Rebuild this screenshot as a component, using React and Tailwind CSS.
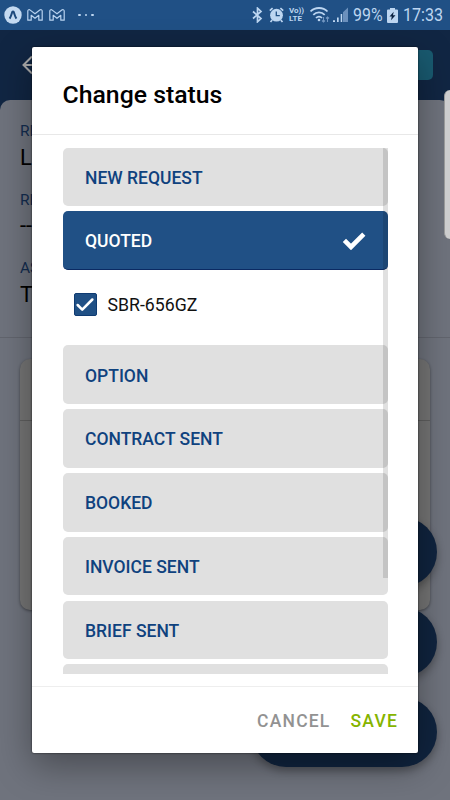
import { Check } from 'lucide-react';
import clsx from 'clsx';

const statuses = [
  { label: 'NEW REQUEST' },
  { label: 'QUOTED', selected: true, reference: 'SBR-656GZ' },
  { label: 'OPTION' },
  { label: 'CONTRACT SENT' },
  { label: 'BOOKED' },
  { label: 'INVOICE SENT' },
  { label: 'BRIEF SENT' },
  { label: '' },
];

const details = [
  { label: 'RE', value: 'L' },
  { label: 'RE', value: '--' },
  { label: 'AS', value: 'T' },
];

function MailIcon() {
  return (
    <svg className="h-3 w-4" viewBox="0 0 16 12" fill="none" stroke="#b9d3f0" strokeWidth="1.2" strokeLinejoin="round">
      <path d="M.8 11.200V2C.8.700 2.300.4 3.200 1.100L8 4.800l4.800-3.700c.9-.7 2.400-.4 2.400.9v9.200h-3.400V6.300L8 9.300 4.200 6.300v4.900Z" />
    </svg>
  );
}

function StatusBar() {
  return (
    <div className="flex h-[30px] items-center justify-between bg-[#205085] pl-1 pr-[6px] text-[#bdd6f1]">
      <div className="flex items-center">
        <svg className="h-[18px] w-[18px]" viewBox="0 0 18 18">
          <circle cx="9" cy="9" r="8.700" fill="#c3d9f1" />
          <path d="M5.600 12.600C7 10.500 7.700 8 8.300 5.900q.7-.9 1.400 0c.6 2.100 1.300 4.600 2.700 6.700" fill="none" stroke="#1d497c" strokeWidth="2" />
        </svg>
        <div className="ml-[5px] flex gap-[6px]">
          <MailIcon />
          <MailIcon />
        </div>
        <div className="ml-[13px] flex gap-1">
          <span className="size-[2.5px] rounded-full bg-[#bdd6f1]" />
          <span className="size-[2.5px] rounded-full bg-[#bdd6f1]" />
          <span className="size-[2.5px] rounded-full bg-[#bdd6f1]" />
        </div>
      </div>
      <div className="flex items-center">
        {/* Bluetooth */}
        <svg className="h-4 w-[11px]" viewBox="0 0 11 16" fill="none" stroke="currentColor" strokeWidth="1.700">
          <path d="M1 4.500 9 11.500 5.500 14.800V1.200L9 4.500 1 11.500" />
        </svg>
        {/* Alarm */}
        <svg className="ml-[6px] h-4 w-[15px]" viewBox="0 0 15 16">
          <circle cx="7.500" cy="8.200" r="6.400" fill="currentColor" />
          <path d="M.8 3.700 3.600 1.200M14.200 3.700 11.400 1.200M3.200 13 1.500 15M11.800 13l1.700 2" stroke="currentColor" strokeWidth="1.700" />
          <path d="M7.300 4.500v4.200h3.500" fill="none" stroke="#205085" strokeWidth="1.300" />
        </svg>
        {/* VoLTE */}
        <div className="ml-[5px] w-[16px] text-[8px] font-bold leading-[8px]">
          <div className="whitespace-nowrap">Vo))</div>
          <div>LTE</div>
        </div>
        {/* Wi-Fi */}
        <svg className="ml-[5px] h-4 w-5" viewBox="0 0 20 16" fill="none" stroke="currentColor">
          <path d="M.5 4.500c4.500-4.700 12.500-4.700 17 0M3.300 7.800c3.200-3.300 8.200-3.300 11.400 0M6 11c1.700-1.800 4.300-1.800 6 0" strokeWidth="1.800" />
          <circle cx="9" cy="13" r="1.300" fill="currentColor" stroke="none" />
          <path d="M13.500 10v5M12 13.500l1.500 1.500 1.500-1.500M17.500 15v-5M16 11.500l1.500-1.500 1.500 1.500" stroke="#7297c2" strokeWidth="1.100" />
        </svg>
        {/* Signal */}
        <svg className="ml-[3px] h-4 w-[15px]" viewBox="0 0 15 16">
          <path d="M0 13.300h2V15H0ZM4 10.500h1.700V15H4ZM7.700 7h1.500v8H7.700Z" fill="currentColor" />
          <path d="M10 5.200 15 .5V15h-5Z" fill="#6c91bd" />
        </svg>
        <span className="ml-[5px] inline-block w-[30px] origin-left scale-x-[0.86] text-[18.500px] leading-none">99%</span>
        <svg className="ml-[4px] h-[15px] w-[11px]" viewBox="0 0 11 15">
          <path d="M3 0h5v1.500h2q1 0 1 1V14q0 1-1 1H1q-1 0-1-1V2.500q0-1 1-1h2Z" fill="currentColor" />
          <path d="M6.700 3.800 2.500 8.500h2.300l-.8 3.700 4.500-5H6Z" fill="#0c2342" />
        </svg>
        <span className="ml-[5px] inline-block w-[41px] origin-left scale-x-[0.87] text-[18.500px] leading-none">17:33</span>
      </div>
    </div>
  );
}

function Background() {
  return (
    <div className="flex h-[800px] flex-col bg-[#112643]">
      <StatusBar />
      <div className="flex h-[70px] items-center justify-between pl-[22px] pr-[17px]">
        <svg className="h-5 w-5" viewBox="0 0 20 20" fill="none" stroke="#aaa" strokeWidth="2">
          <path d="M10 1.500 1.500 10l8.500 8.500M1.500 10H19" />
        </svg>
        <div className="h-[30px] w-20 rounded-[5px] bg-[#195a70]" />
      </div>
      <div className="flex-1 rounded-t-[10px] bg-[#6f737d]">
        <div className="h-[238px] border-b border-[#62656e] pl-5 pt-[22px]">
          {details.map((item, i) => (
            <div key={i} className="h-[68.5px]">
              <div className="text-[15.500px] leading-[18px] text-[#132c4f]">{item.label}</div>
              <div className="mt-[3.500px] text-[22px] leading-[28px] text-black">{item.value}</div>
            </div>
          ))}
        </div>
        <div className="mx-5 mt-[21px] h-[251px] rounded-[10px] bg-[#757575] pt-[61px] shadow-[0_1px_3px_rgba(0,0,0,0.4)]">
          <div className="border-b border-[#5f5f5f]" />
        </div>
      </div>
    </div>
  );
}

function StatusRow({ label, selected, reference }) {
  return (
    <>
      <div
        className={clsx(
          'flex h-[58.5px] shrink-0 items-center justify-between rounded-[5px] pl-[22.5px] pr-[22px] pt-[2px] text-[17.5px] font-medium',
          selected ? 'border-b border-[#0b2a63] bg-[#205085] text-white' : 'bg-[#e0e0e0] text-[#0f427e]'
        )}
      >
        <span>{label}</span>
        {selected && (
          <svg className="h-[18px] w-[24px]" viewBox="0 0 24 18" fill="none" stroke="white" strokeWidth="4.600">
            <path d="M2.400 8.400 9 15 21.800 2.200" />
          </svg>
        )}
      </div>
      {reference && (
        <div className="flex h-[65.100px] shrink-0 items-center pb-[6px] pl-[11px]">
          <div className="flex size-[23px] items-center justify-center rounded-[2px] border border-[#0f3b72] bg-[#205085]">
            <Check className="size-[22px] shrink-0 text-white" strokeWidth={2.800} />
          </div>
          <span className="ml-[11px] pt-px text-[17.700px] text-[#111]">{reference}</span>
        </div>
      )}
    </>
  );
}

function StatusDialog() {
  return (
    <div className="absolute left-[32px] top-[47px] flex h-[706px] w-[386px] flex-col rounded-[2px] bg-white shadow-[0_12px_36px_rgba(0,0,0,0.36),0_0_2px_rgba(0,0,0,0.8)]">
      <div className="flex h-[88px] items-center border-b border-[#e8e8e8] pl-[30.500px] pt-[9px]">
        <h1 className="text-[24.800px] font-medium text-black">Change status</h1>
      </div>
      <div className="relative ml-[30.500px] mt-[12.500px] flex h-[526px] w-[325px] flex-col gap-[5.300px] overflow-hidden">
        {statuses.map((status, i) => (
          <StatusRow key={i} {...status} />
        ))}
        {/* Scroll thumb */}
        <div className="absolute right-0 top-0 h-[430px] w-[5px] bg-black/12" />
      </div>
      <div className="mt-auto flex h-[67px] items-center justify-end gap-5 border-t border-[#eeeeee] pr-5 pt-[2px] text-[17.500px] font-medium tracking-[1.200px]">
        <button className="text-[#929292]">CANCEL</button>
        <button className="text-[#86b400]">SAVE</button>
      </div>
    </div>
  );
}

export default function App() {
  return (
    <div className="relative h-[800px] w-[450px] overflow-hidden font-['Roboto',sans-serif]">
      <Background />
      {/* Floating actions */}
      <div className="absolute left-[251px] top-[517px] flex flex-col gap-5">
        <div className="h-[70px] w-[186px] rounded-full bg-[#10243f] shadow-[0_4px_8px_rgba(0,0,0,0.3)]" />
        <div className="h-[70px] w-[186px] rounded-full bg-[#10243f] shadow-[0_4px_8px_rgba(0,0,0,0.3)]" />
        <div className="h-[70px] w-[186px] rounded-full bg-[#10243f] shadow-[0_4px_8px_rgba(0,0,0,0.3)]" />
      </div>
      <StatusDialog />
      {/* Edge panel handle */}
      <div className="absolute right-0 top-[90px] h-[149px] w-[6px] rounded-l-[6px] border-l border-[#999] bg-[#cdcdce]" />
    </div>
  );
}
